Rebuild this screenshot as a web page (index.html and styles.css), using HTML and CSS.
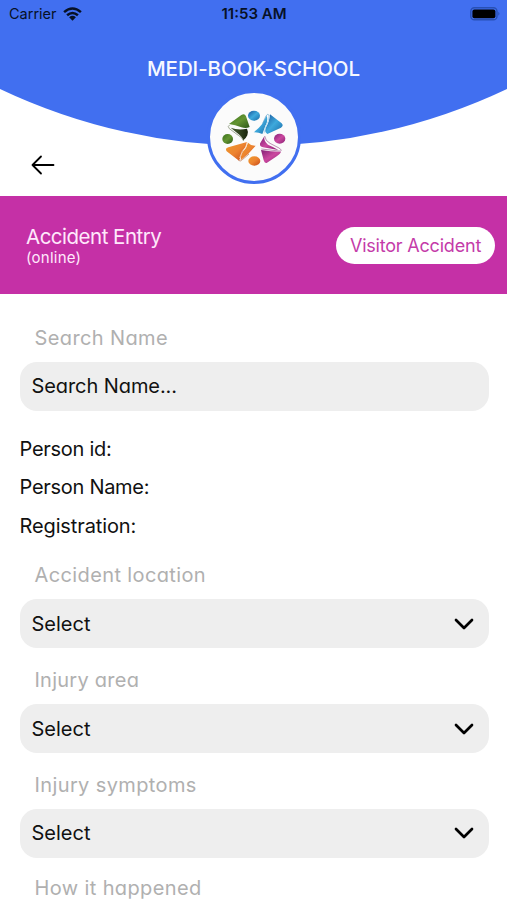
FILE: index.html
```html
<!DOCTYPE html>
<html lang="en">
<head>
<meta charset="utf-8">
<title>Accident Entry</title>
<link rel="stylesheet" href="styles.css">
</head>
<body>
<header class="header">
  <svg class="curve" viewBox="0 0 507 196" aria-hidden="true"><path fill="#416ff0" d="M0 0H507V89A592 592 0 0 1 0 89Z"/></svg>
  <div class="status">
    <div class="carrier"><span class="carrier-name">Carrier</span>
      <svg width="19" height="14" viewBox="0 0 19 14" fill="none" stroke="#071126" stroke-width="2.5"><path d="M1.1 5.1Q9.5-2.2 17.9 5.1M4.1 8.3Q9.5 3.6 14.9 8.3"/><path fill="#071126" stroke="none" d="M9.5 13.7L6.1 10.3Q9.5 7.4 12.9 10.3Z"/></svg>
    </div>
    <span class="time">11:53 AM</span>
    <svg class="battery" width="31" height="14" viewBox="0 0 31 14"><rect x=".8" y=".8" width="26.2" height="12" rx="3.6" fill="none" stroke="#2850b4" stroke-width="1.4"/><rect x="2.4" y="2.4" width="23" height="8.8" rx="2" fill="#000"/><path d="M28.3 4.8Q30.6 6.8 28.3 8.8Z" fill="#2850b4"/></svg>
  </div>
  <h1 class="title">MEDI-BOOK-SCHOOL</h1>
  <svg class="back" width="24" height="20" viewBox="0 0 24 20" fill="none" stroke="#000" stroke-width="1.8" stroke-linecap="round" stroke-linejoin="round"><path d="M22.5 10H1.5M10 1.5L1.5 10L10 18.5"/></svg>
  <div class="logo">
    <svg width="88" height="88" viewBox="18 13 264 264">
      <defs>
        <linearGradient id="green" x2="1" y2="1"><stop stop-color="#386f1c"/><stop offset=".5" stop-color="#649532"/><stop offset="1" stop-color="#2c5718"/></linearGradient>
        <linearGradient id="dark" x2="1"><stop stop-color="#4c6335"/><stop offset="1" stop-color="#18240c"/></linearGradient>
        <linearGradient id="blue" x2="1" y2="1"><stop stop-color="#185399"/><stop offset=".5" stop-color="#3ea9dc"/><stop offset="1" stop-color="#1b6ba8"/></linearGradient>
        <linearGradient id="pink" x2="1" y2="1"><stop stop-color="#811f76"/><stop offset=".5" stop-color="#cb489f"/><stop offset="1" stop-color="#8b2377"/></linearGradient>
        <linearGradient id="orange" x2="1" y2="1"><stop stop-color="#ed9b2b"/><stop offset=".5" stop-color="#ed8330"/><stop offset="1" stop-color="#c64817"/></linearGradient>
      </defs>
      <path fill="url(#green)" d="M75 106L112 79Q122 73 126 83L137 115Q126 121 112 116Q94 108 75 106Z"/>
      <path fill="url(#dark)" d="M80 117Q103 126 129 120Q134 129 130 140Q126 149 118 155Q115 145 106 138Z"/>
      <path fill="none" stroke="#8c987d" stroke-width="2.5" d="M119 157Q114 145 103 140L76 120Q69 112 77 109"/>
      <path fill="url(#blue)" d="M149 131Q165 119 174 107L188 81Q193 96 184 112L175 136Q162 130 149 131Z"/>
      <path fill="url(#blue)" d="M198 77L233 104Q240 111 231 117L190 136Q178 129 188 112Q196 99 198 77Z"/>
      <path fill="none" stroke="#b8ddf0" stroke-width="3" d="M195 80Q196 97 185 113L180 134"/>
      <path fill="none" stroke="#5a9dc8" stroke-width="2" d="M176 104L186 82Q190 73 196 80"/>
      <path fill="url(#pink)" d="M181 143L171 159Q162 171 177 176L223 184Q207 174 192 168Q179 158 181 143Z"/>
      <path fill="url(#pink)" d="M171 184Q199 189 231 189Q230 195 216 204L189 222Q182 225 179 215Z"/>
      <path fill="none" stroke="#9b5a90" stroke-width="2" d="M182 142Q184 157 198 164L225 178Q239 188 225 187L172 181"/>
      <path fill="url(#orange)" d="M73 176L129 160Q128 174 118 185L105 216L68 188Q62 179 73 176Z"/>
      <path fill="url(#orange)" d="M132 162Q141 172 155 171L133 195L110 215Q109 202 116 190Q129 177 132 162Z"/>
      <path fill="none" stroke="#f8ddc8" stroke-width="2.5" d="M130 160Q128 177 115 188L107 208"/>
      <path fill="none" stroke="#b66b47" stroke-width="2" d="M104 215Q108 220 115 213L135 196"/>
      <ellipse cx="150" cy="81" rx="18" ry="15" fill="url(#blue)"/>
      <ellipse cx="71" cy="151" rx="16" ry="15" fill="url(#green)"/>
      <ellipse cx="227" cy="150" rx="17" ry="15" fill="url(#pink)"/>
      <ellipse cx="151" cy="217" rx="18" ry="14" fill="url(#orange)"/>
    </svg>
  </div>
</header>
<section class="banner">
  <div class="banner-text">
    <h2 class="heading">Accident Entry</h2>
    <p class="state">(online)</p>
  </div>
  <button class="visitor"><span>Visitor Accident</span></button>
</section>
<main class="form">
  <label class="label search-label">Search Name</label>
  <div class="field"><span class="query">Search Name...</span></div>
  <div class="person">
    <p class="pid">Person id:</p>
    <p class="pname">Person Name:</p>
    <p class="reg">Registration:</p>
  </div>
  <label class="label location">Accident location</label>
  <div class="field"><span class="select">Select</span><svg class="chevron" viewBox="0 0 20 12"><path d="M2 2L10 10L18 2"/></svg></div>
  <label class="label area">Injury area</label>
  <div class="field"><span class="select">Select</span><svg class="chevron" viewBox="0 0 20 12"><path d="M2 2L10 10L18 2"/></svg></div>
  <label class="label symptoms">Injury symptoms</label>
  <div class="field"><span class="select">Select</span><svg class="chevron" viewBox="0 0 20 12"><path d="M2 2L10 10L18 2"/></svg></div>
  <label class="label happened">How it happened</label>
</main>
</body>
</html>
```
FILE: styles.css
```css
* { box-sizing: border-box; }
body { margin: 0; height: 900px; overflow: hidden; background: #fff; color: #111; font-family: Inter, sans-serif; }
h1, h2, p { margin: 0; font-weight: 400; }
svg { display: block; flex: none; }
.header { position: relative; height: 196px; }
.curve { position: absolute; inset: 0; width: 507px; height: 196px; }
.status { position: relative; display: grid; grid-template-columns: 1fr auto 1fr; align-items: center; height: 27px; padding: 0 6px 0 9px; color: #071126; }
.carrier { display: flex; align-items: center; gap: 6px; font-size: 14.5px; }
.time { margin-right: 2px; font-size: 15px; font-weight: 600; }
.battery { justify-self: end; }
.title { position: relative; margin-top: 28px; height: 28px; line-height: 28px; text-align: center; color: #f6f8ff; font-size: 20.5px; font-weight: 500; letter-spacing: -.05px; }
.back { position: absolute; left: 31px; top: 155px; }
.logo { position: absolute; left: 206.5px; top: 89.5px; width: 94px; height: 94px; border: 3px solid #416ff0; border-radius: 50%; background: #fbfbfb; overflow: hidden; }
.banner { display: flex; align-items: center; justify-content: space-between; height: 98px; padding: 0 12px 0 26px; background: #c530a6; color: #ffe8fb; }
.banner-text { padding-top: 3px; }
.heading { height: 23px; line-height: 24px; font-size: 20.5px; letter-spacing: -.5px; }
.state { height: 20px; line-height: 20px; font-size: 15px; letter-spacing: .25px; }
.visitor { display: flex; align-items: center; justify-content: center; width: 159px; height: 37px; padding: 0; border: 0; border-radius: 19px; background: #fff; color: #c43ba9; font: 400 18px Inter, sans-serif; letter-spacing: -.2px; }
.form { display: flex; flex-direction: column; padding: 0 18.5px 0 19.5px; }
.label { height: 56px; padding: 19px 0 0 15px; line-height: 26px; font-size: 20px; letter-spacing: .38px; color: #b0b0b0; font-feature-settings: "cv11"; white-space: nowrap; }
.search-label { height: 68px; padding-top: 31px; }
.happened { height: 42px; padding-top: 18px; line-height: 24px; }
.area { letter-spacing: .25px; }
.field { display: flex; align-items: center; justify-content: space-between; height: 48.7px; padding: 0 15px 0 12px; border-radius: 17px; background: #eee; font-size: 20px; font-feature-settings: "cv11"; }
.query { letter-spacing: -.08px; }
.chevron { width: 20px; height: 12px; fill: none; stroke: #000; stroke-width: 2.7; stroke-linecap: round; stroke-linejoin: round; }
.person { height: 132.8px; padding-top: 19px; font-size: 20px; line-height: 38.4px; letter-spacing: -.28px; }
.reg { letter-spacing: -.12px; }
```
